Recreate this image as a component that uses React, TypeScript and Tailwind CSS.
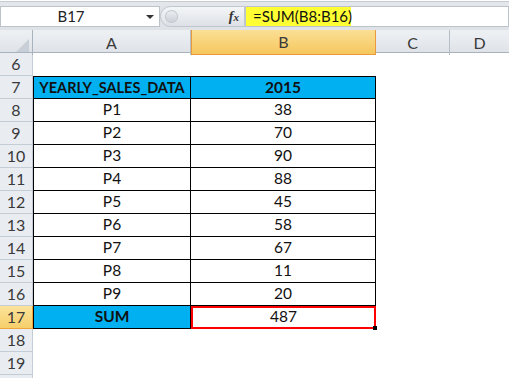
import React from 'react';

const rows: [string, string][] = [
  ['P1', '38'],
  ['P2', '70'],
  ['P3', '90'],
  ['P4', '88'],
  ['P5', '45'],
  ['P6', '58'],
  ['P7', '67'],
  ['P8', '11'],
  ['P9', '20'],
];

const grid = 'grid grid-cols-[33px_158px_185px_74px_1fr]';
const rowHead =
  'flex h-[23px] items-center justify-center border-r border-b border-[#c4ccd6] bg-[#e9edf2] text-[16px] text-[#3a3a3a]';

function RowNum({ n, active }: { n?: number; active?: boolean }) {
  return (
    <div
      className={
        active
          ? 'flex h-[23px] items-center justify-center border-r border-b border-[#f0a43c] bg-gradient-to-b from-[#fbe39a] to-[#f6cf6a] text-[16px] text-[#3a3a3a]'
          : rowHead
      }
    >
      {n}
    </div>
  );
}

export default function App() {
  return (
    <div className="h-[378px] w-[509px] overflow-hidden bg-white font-['Lato','Open_Sans',sans-serif]">
      {/* formula bar */}
      <div className="mt-[1px] h-[5px] border-t border-[#c6cbd1] bg-[#e3e6ea]" />
      <div className="flex h-[21px] bg-[#dfe3e8]">
        <div className="relative flex w-[160px] items-center justify-center border border-[#bcc3cb] bg-white pr-[18px] text-[15px] text-[#222]">
          B17
          <span className="absolute right-[5px] top-[8px] h-0 w-0 border-x-[4px] border-t-[4px] border-x-transparent border-t-[#333]" />
        </div>
        <div className="flex w-[85px] items-center">
          <div className="flex h-[21px] flex-1 items-center justify-end rounded-l-full border border-[#c0c6cd] bg-gradient-to-b from-[#f4f6f8] to-[#dde1e6] pr-[5px]">
            <span className="mr-auto ml-[4px] h-[13px] w-[13px] rounded-full bg-gradient-to-b from-[#eef0f3] to-[#c9ced5] shadow-[inset_0_0_0_1px_#c3c9cf]" />
            <span className="font-['Liberation_Serif',serif] text-[14px] font-bold italic text-[#333]">
              f<span className="text-[11px]">x</span>
            </span>
          </div>
        </div>
        <div className="flex flex-1 items-center border border-[#bcc3cb] bg-white">
          <div className="flex h-full w-[105px] items-center bg-[#ffff33] pl-[7px] text-[15px] text-[#111]">
            =SUM(B8:B16)
          </div>
        </div>
      </div>
      <div className="h-[3px] bg-[#dfe3e8]" />

      {/* column headers */}
      <div className={`${grid} h-[23px] border-b border-[#a9b2bd] bg-gradient-to-b from-[#eef1f4] to-[#dfe3e8] text-[16px] text-[#3a3a3a]`}>
        <div className="relative border-r border-[#a9b2bd]">
          <span className="absolute right-[3px] bottom-[3px] h-0 w-0 border-b-[13px] border-l-[13px] border-b-[#c9cfd6] border-l-transparent" />
        </div>
        <div className="flex items-center justify-center border-r border-[#b5bdc7]">A</div>
        <div className="flex items-center justify-center border-x border-b border-[#e89a3c] bg-gradient-to-b from-[#fbdf95] to-[#f5c75c]">
          B
        </div>
        <div className="flex items-center justify-center border-r border-[#b5bdc7]">C</div>
        <div className="flex items-center justify-center">D</div>
      </div>

      {/* sheet */}
      <div className={`${grid} text-[15.5px] text-[#111]`}>
        <RowNum n={6} />
        <div className="col-span-4 h-[23px]" />

        <RowNum n={7} />
        <div className="flex h-[23px] items-center justify-center border border-black bg-[#00b0f0] text-[14.5px] font-bold">
          YEARLY_SALES_DATA
        </div>
        <div className="flex h-[23px] items-center justify-center border-y border-r border-black bg-[#00b0f0] font-bold">
          2015
        </div>
        <div className="col-span-2" />

        {rows.map(([p, v], i) => (
          <React.Fragment key={p}>
            <RowNum n={8 + i} />
            <div className="flex h-[23px] items-center justify-center border-x border-b border-black">{p}</div>
            <div className="flex h-[23px] items-center justify-center border-r border-b border-black">{v}</div>
            <div className="col-span-2" />
          </React.Fragment>
        ))}

        <RowNum n={17} active />
        <div className="flex h-[23px] items-center justify-center border-x border-b border-black bg-[#00b0f0] font-bold">
          SUM
        </div>
        <div className="relative flex h-[23px] items-center justify-center border-[2px] border-[#ff0000] pb-[1px]">
          487
          <span className="absolute right-[-3px] bottom-[-3px] h-[4px] w-[4px] bg-black" />
        </div>
        <div className="col-span-2" />

        <RowNum n={18} />
        <div className="col-span-4" />
        <RowNum n={19} />
        <div className="col-span-4" />
        <RowNum />
        <div className="col-span-4" />
      </div>
    </div>
  );
}
